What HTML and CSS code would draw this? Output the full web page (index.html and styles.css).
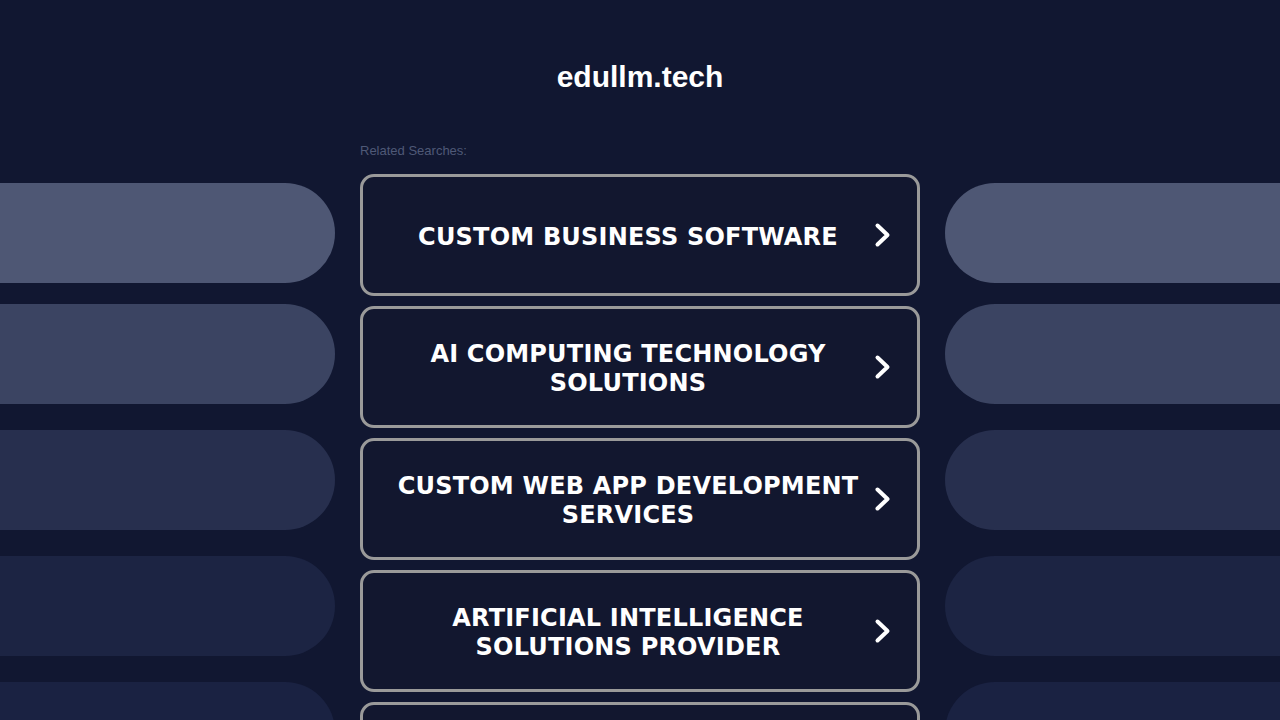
FILE: index.html
```html
<!DOCTYPE html>
<html lang="en">
<head>
<meta charset="utf-8">
<title>edullm.tech</title>
<link rel="stylesheet" href="styles.css">
</head>
<body>
<div class="page">
  <aside class="side side-left">
    <div class="pill p1"></div>
    <div class="pill p2"></div>
    <div class="pill p3"></div>
    <div class="pill p4"></div>
    <div class="pill p5"></div>
  </aside>
  <main class="center">
    <h1 class="title">edullm.tech</h1>
    <div class="related">Related Searches:</div>
    <div class="list">
      <a class="btn" href="#"><span class="btn-text">CUSTOM BUSINESS SOFTWARE</span><svg class="chev" viewBox="0 0 18 26" width="18" height="26"><path d="M3.5 3.5 L13.5 13 L3.5 22.5" fill="none" stroke="#fff" stroke-width="4" stroke-linecap="round" stroke-linejoin="round"/></svg></a>
      <a class="btn" href="#"><span class="btn-text">AI COMPUTING TECHNOLOGY SOLUTIONS</span><svg class="chev" viewBox="0 0 18 26" width="18" height="26"><path d="M3.5 3.5 L13.5 13 L3.5 22.5" fill="none" stroke="#fff" stroke-width="4" stroke-linecap="round" stroke-linejoin="round"/></svg></a>
      <a class="btn" href="#"><span class="btn-text">CUSTOM WEB APP DEVELOPMENT SERVICES</span><svg class="chev" viewBox="0 0 18 26" width="18" height="26"><path d="M3.5 3.5 L13.5 13 L3.5 22.5" fill="none" stroke="#fff" stroke-width="4" stroke-linecap="round" stroke-linejoin="round"/></svg></a>
      <a class="btn" href="#"><span class="btn-text">ARTIFICIAL INTELLIGENCE SOLUTIONS PROVIDER</span><svg class="chev" viewBox="0 0 18 26" width="18" height="26"><path d="M3.5 3.5 L13.5 13 L3.5 22.5" fill="none" stroke="#fff" stroke-width="4" stroke-linecap="round" stroke-linejoin="round"/></svg></a>
      <a class="btn" href="#" aria-label="More related searches"><span class="btn-text"></span><svg class="chev" viewBox="0 0 18 26" width="18" height="26"><path d="M3.5 3.5 L13.5 13 L3.5 22.5" fill="none" stroke="#fff" stroke-width="4" stroke-linecap="round" stroke-linejoin="round"/></svg></a>
    </div>
  </main>
  <aside class="side side-right">
    <div class="pill p1"></div>
    <div class="pill p2"></div>
    <div class="pill p3"></div>
    <div class="pill p4"></div>
    <div class="pill p5"></div>
  </aside>
</div>
</body>
</html>
```
FILE: styles.css
```css
html, body {
  margin: 0;
  padding: 0;
  background: #111731;
  height: 720px;
  overflow: hidden;
}
.page {
  display: grid;
  grid-template-columns: 1fr 560px 1fr;
  column-gap: 25px;
  align-items: start;
}
.side {
  display: flex;
  flex-direction: column;
  gap: 26px;
  padding-top: 183px;
}
.pill {
  height: 100px;
  flex: none;
}
.side-left .pill { border-radius: 0 50px 50px 0; }
.side-right .pill { border-radius: 50px 0 0 50px; }
.p1 { background: #4e5774; }
.p2 { background: #3b4462; margin-top: -5px; }
.p3 { background: #272f4e; }
.p4 { background: #1c2443; }
.p5 { background: #1a2242; }

.center {
  display: flex;
  flex-direction: column;
  padding-top: 59px;
}
.title {
  margin: 0;
  font-family: "Liberation Sans", Arial, sans-serif;
  font-weight: bold;
  font-size: 30px;
  line-height: 36px;
  color: #ffffff;
  text-align: center;
}
.related {
  margin-top: 48px;
  font-family: "Liberation Sans", Arial, sans-serif;
  font-size: 13px;
  line-height: 16px;
  color: #4f5977;
}
.list {
  margin-top: 15px;
  display: flex;
  flex-direction: column;
  gap: 10px;
}
.btn {
  box-sizing: border-box;
  height: 122px;
  border: 3px solid #9a9a9a;
  border-radius: 14px;
  background: #12172f;
  display: flex;
  align-items: center;
  padding: 4px 20px 0 20px;
  text-decoration: none;
  flex: none;
}
.btn-text {
  flex: 1;
  text-align: center;
  font-family: "DejaVu Sans", Verdana, sans-serif;
  font-weight: bold;
  font-size: 24px;
  line-height: 29px;
  letter-spacing: 0.2px;
  color: #ffffff;
}
.chev {
  flex: none;
  width: 18px;
  height: 26px;
  margin-left: 1px;
  margin-right: 5px;
  margin-bottom: 4px;
}
```
